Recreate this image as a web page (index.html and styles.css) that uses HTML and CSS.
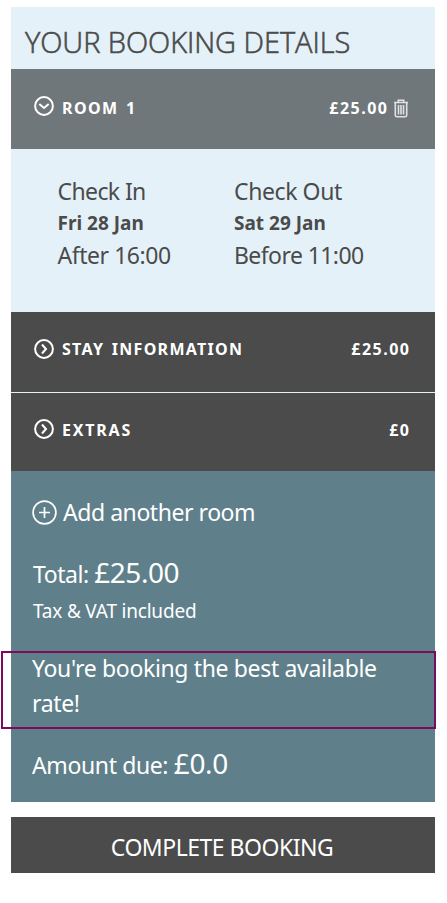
FILE: index.html
```html
<!DOCTYPE html>
<html lang="en">
<head>
<meta charset="utf-8">
<title>Your booking details</title>
<link rel="stylesheet" href="styles.css">
</head>
<body>
<main class="booking">
  <h1 class="title">YOUR BOOKING DETAILS</h1>
  <section class="bar bar-room">
    <svg class="icon" viewBox="0 0 20 20"><circle cx="10" cy="10" r="8.9"/><path d="M5.300 8 10 12l4.700-4"/></svg>
    <h2 class="label room-label">ROOM 1</h2>
    <span class="price">£25.00</span>
    <svg class="trash" viewBox="0 0 16 19"><path d="M1 3.500h14M5.300 3.200V1.300h5.400v1.900M2.300 4v12.200q0 1.600 1.600 1.600h8.200q1.600 0 1.600-1.600V4M5.500 6v9.500M8 6v9.500M10.500 6v9.500"/></svg>
  </section>
  <section class="dates">
    <div class="stay">
      <p class="check-in">Check In</p>
      <p class="day">Fri 28 Jan</p>
      <p class="after">After 16:00</p>
    </div>
    <div class="stay">
      <p class="check-out">Check Out</p>
      <p class="day">Sat 29 Jan</p>
      <p class="before">Before 11:00</p>
    </div>
  </section>
  <section class="bar bar-stay">
    <svg class="icon" viewBox="0 0 20 20"><circle cx="10" cy="10" r="8.9"/><path d="m8 5.500 4 4.500-4 4.500"/></svg>
    <h2 class="label stay-label">STAY INFORMATION</h2>
    <span class="price">£25.00</span>
  </section>
  <section class="bar bar-extras">
    <svg class="icon" viewBox="0 0 20 20"><circle cx="10" cy="10" r="8.9"/><path d="m8 5.500 4 4.500-4 4.500"/></svg>
    <h2 class="label extras-label">EXTRAS</h2>
    <span class="price">£0</span>
  </section>
  <section class="summary">
    <div class="add">
      <svg class="plus" viewBox="0 0 25 25"><circle cx="12.500" cy="12.500" r="11.400"/><path d="M12.500 7v11M7 12.500h11"/></svg>
      <span class="add-text">Add another room</span>
    </div>
    <p class="total"><span class="total-label">Total:</span> <span class="amount">£25.00</span></p>
    <p class="tax">Tax &amp; VAT included</p>
    <p class="rate">You're booking the best available rate!</p>
    <p class="due"><span class="due-label">Amount due:</span> <span class="amount">£0.0</span></p>
  </section>
  <button class="complete">COMPLETE BOOKING</button>
</main>
</body>
</html>
```
FILE: styles.css
```css
*, *::after { box-sizing: border-box; }
body {
  margin: 0;
  background: #fff;
  color: #4a4b4a;
  font: 23px/32px "Noto Sans", "Open Sans", sans-serif;
  letter-spacing: -0.45px;
}
h1, h2, p { margin: 0; font-weight: 400; white-space: nowrap; }
.booking { padding: 7px 12px 0 11px; }
.title {
  height: 62px;
  padding: 15px 14px 0;
  background: #e4f1f9;
  font: 300 29px/40px "Open Sans", sans-serif;
  letter-spacing: -0.05px;
  -webkit-text-stroke: 0.6px currentColor;
}
.bar {
  display: flex;
  align-items: center;
  height: 80px;
  padding: 0 25px 6px 23px;
  background: #4a4b4a;
  color: #fff;
}
.bar-room { padding-right: 26px; background: #70777a; }
.bar-extras { border-top: 1px solid #e4f1f9; height: 79px; padding-bottom: 7px; }
.icon, .trash, .plus { flex: none; fill: none; stroke: currentColor; }
.icon { width: 20px; height: 20px; stroke-width: 2; }
.label, .price { font-size: 16px; font-weight: 700; letter-spacing: 1.5px; }
.bar-room .label, .bar-room .price, .bar-extras .label, .bar-extras .price { padding-top: 3px; }
.label { flex: 1; margin-left: 8px; }
.room-label { letter-spacing: 1.4px; word-spacing: 2px; }
.stay-label { word-spacing: 2px; letter-spacing: 1.3px; }
.extras-label { letter-spacing: 1.8px; }
.price { margin-right: -0.5px; }
.trash { width: 16px; height: 19px; margin: 4px 0 0 5px; color: #dfe2e3; stroke-width: 1.6; }
.dates {
  display: grid;
  grid-template-columns: 176.5px 1fr;
  height: 163px;
  padding: 26px 0 0 46.5px;
  background: #e4f1f9;
}
.check-in { letter-spacing: -0.6px; }
.check-out { letter-spacing: -0.4px; }
.before { letter-spacing: -0.58px; }
.day { font-size: 19px; font-weight: 700; letter-spacing: 0; }
.summary {
  height: 331px;
  padding: 24px 21px 0;
  background: #5f808b;
  color: #fff;
}
.add { display: flex; align-items: center; height: 34px; }
.plus { width: 25px; height: 25px; stroke-width: 1.7; }
.add-text { margin-left: 6px; }
.total { margin-top: 23px; height: 40px; line-height: 40px; }
.total-label { margin-left: 1px; }
.amount { font-size: 28px; }
.tax { margin: 1px 0 0 1px; font-size: 19px; line-height: 36px; letter-spacing: -0.2px; }
.rate { width: 370px; margin-top: 22px; line-height: 35px; letter-spacing: -0.35px; white-space: normal; }
.rate::after {
  content: "";
  position: absolute;
  left: 1px;
  top: 651px;
  width: 435px;
  height: 78px;
  border: 2px solid #7a0b5f;
}
.due { margin-top: 22px; line-height: 40px; letter-spacing: -0.38px; }
.complete {
  display: block;
  width: 100%;
  height: 56px;
  margin-top: 15px;
  padding: 0 2px 0 0;
  border: 0;
  background: #4a4b4a;
  color: #fff;
  font: 23px/60px "Noto Sans", sans-serif;
  letter-spacing: -0.5px;
}
```
